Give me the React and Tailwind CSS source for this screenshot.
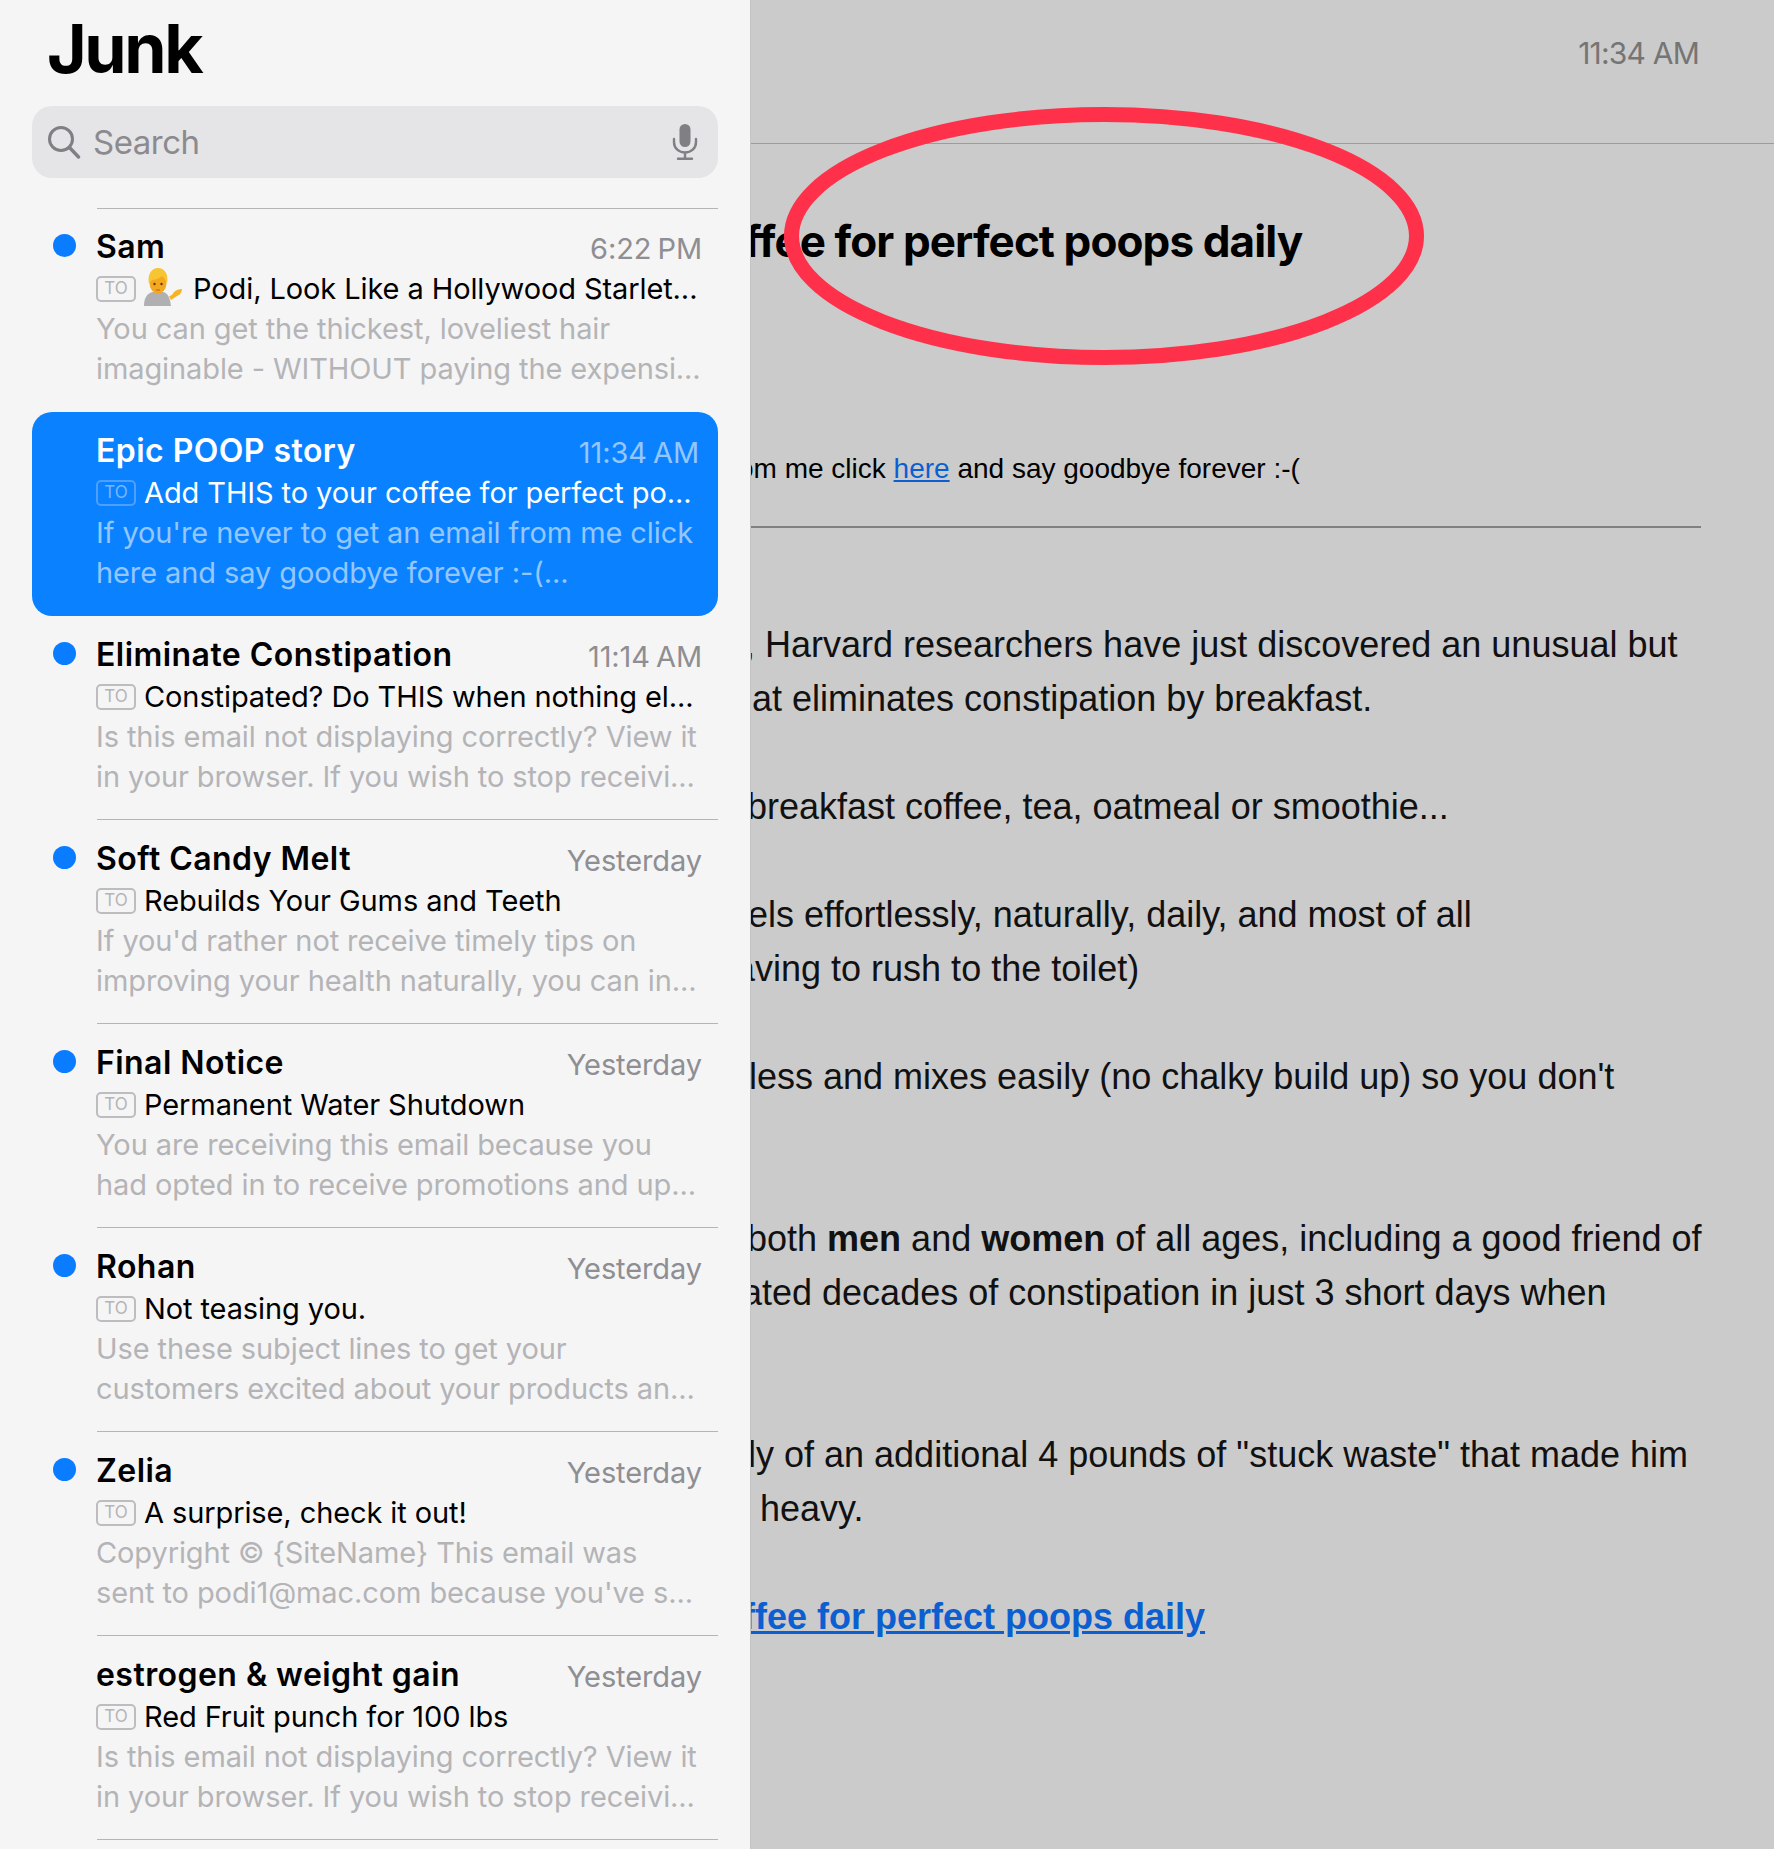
const rows = [
  { from: "Sam", time: "6:22 PM", subject: "Podi, Look Like a Hollywood Starlet...", emoji: true, l1: "You can get the thickest, loveliest hair", l2: "imaginable - WITHOUT paying the expensi...", unread: true },
  { from: "Epic POOP story", time: "11:34 AM", subject: "Add THIS to your coffee for perfect po...", l1: "If you're never to get an email from me click", l2: "here and say goodbye forever :-(...", selected: true },
  { from: "Eliminate Constipation", time: "11:14 AM", subject: "Constipated? Do THIS when nothing el...", l1: "Is this email not displaying correctly? View it", l2: "in your browser. If you wish to stop receivi...", unread: true },
  { from: "Soft Candy Melt", time: "Yesterday", subject: "Rebuilds Your Gums and Teeth", l1: "If you'd rather not receive timely tips on", l2: "improving your health naturally, you can in...", unread: true },
  { from: "Final Notice", time: "Yesterday", subject: "Permanent Water Shutdown", l1: "You are receiving this email because you", l2: "had opted in to receive promotions and up...", unread: true },
  { from: "Rohan", time: "Yesterday", subject: "Not teasing you.", l1: "Use these subject lines to get your", l2: "customers excited about your products an...", unread: true },
  { from: "Zelia", time: "Yesterday", subject: "A surprise, check it out!", l1: "Copyright © {SiteName} This email was", l2: "sent to podi1@mac.com because you've s...", unread: true },
  { from: "estrogen & weight gain", time: "Yesterday", subject: "Red Fruit punch for 100 lbs", l1: "Is this email not displaying correctly? View it", l2: "in your browser. If you wish to stop receivi..." },
];

function ToBadge({ selected }) {
  return (
    <span className={`flex h-[26px] w-[40px] shrink-0 items-center justify-center rounded-[5px] border-2 text-[17px] leading-none ${selected ? "border-[#4f9fff] text-[#7ab6ff]" : "border-[#bdbdbf] text-[#b4b4b6]"}`}>
      TO
    </span>
  );
}

// person tipping hand, drawn since the emoji font isn't installed
function PersonTipping() {
  return (
    <svg width="38" height="38" viewBox="0 0 38 38" className="mr-[3px] -mt-[3px] shrink-0">
      <path d="M0 38c0-8 3-13 9-14h10c5 1 7 6 8 14z" fill="#b0b0b2" />
      <path d="M25 28c2 0 3-1 5-4 2-2 5-3 8-3 0 3-2 6-5 7-2 1-4 3-6 4z" fill="#f5b325" />
      <ellipse cx="14" cy="15" rx="8.500" ry="10.500" fill="#f5a81f" />
      <path d="M5 16C3 6 8 0 14 0s11 5 9 16c-1-4-3-6-5-8-3 3-8 4-10 4-1 1-2 3-3 4z" fill="#f7c531" />
      <circle cx="10.500" cy="16" r="1.200" fill="#5a3a10" />
      <circle cx="17.500" cy="16" r="1.200" fill="#5a3a10" />
      <path d="M12 22h4" stroke="#b5651d" strokeWidth="1" />
    </svg>
  );
}

function MailRow({ row }) {
  const { selected, emoji } = row;
  const preview = `text-[29px] leading-[40px] tracking-[-0.1px] whitespace-nowrap ${selected ? "text-[#94c6ff]" : "text-[#b4b4b6]"}`;
  return (
    <div className={`relative pl-[64px] ${emoji ? "pt-[18px]" : "pt-[19px]"} ${selected ? "h-[204px] rounded-[20px] bg-[#0a82ff] pr-[19px]" : "h-[203px] pr-[16px]"}`}>
      {row.unread && <span className={`absolute left-[21px] h-[23px] w-[23px] rounded-full bg-[#0a7cff] ${emoji ? "top-[25px]" : "top-[26px]"}`} />}
      <div className="flex h-[40px] items-center justify-between">
        <span className={`text-[32px] font-semibold tracking-[0.45px] ${selected ? "text-white" : "text-black"}`}>{row.from}</span>
        <span className={`mt-[3px] text-[29px] tracking-[-0.1px] [word-spacing:-2px] ${selected ? "text-[#94c6ff]" : "text-[#8e8e93]"}`}>{row.time}</span>
      </div>
      <div className={`mt-[1px] flex h-[41px] items-center gap-[8px] text-[29px] tracking-[-0.1px] whitespace-nowrap ${selected ? "text-white" : "text-black"}`}>
        <ToBadge selected={selected} />
        {emoji && <PersonTipping />}
        <span>{row.subject}</span>
      </div>
      <p className={preview}>{row.l1}</p>
      <p className={preview}>{row.l2}</p>
    </div>
  );
}

function Sidebar() {
  return (
    <aside className="relative z-10 flex h-full w-[750px] shrink-0 flex-col overflow-hidden bg-[#f5f5f6] shadow-[1px_0_0_#c4c4c4]">
      <h1 className="pl-[47px] pt-[12px] text-[68px] leading-[72px] font-bold tracking-[-2.4px] text-black">Junk</h1>
      <div className="mx-[32px] mt-[22px] flex h-[72px] items-center rounded-[20px] bg-[#e5e5e7] pl-[15px] pr-[20px]">
        <svg width="34" height="34" viewBox="0 0 34 34" fill="none" stroke="#7f7f84" strokeWidth="3" strokeLinecap="round" className="shrink-0">
          <circle cx="14" cy="14" r="11.500" />
          <path d="M22.500 22.500 31.500 32" strokeWidth="3.400" />
        </svg>
        <span className="mt-[2px] ml-[12px] flex-1 text-[33px] tracking-[-0.5px] text-[#8b8b8f]">Search</span>
        <svg width="26" height="36" viewBox="0 0 26 36" fill="none" stroke="#7f7f84" strokeWidth="2.400" strokeLinecap="round" className="shrink-0">
          <rect x="7.500" y="0" width="11" height="23" rx="5.500" fill="#7f7f84" stroke="none" />
          <path d="M2 15v3c0 6.500 5 10.500 11 10.500S24 24.500 24 18v-3M13 28.500V34M6 34.800h14" />
        </svg>
      </div>
      <div className="mx-[32px] mt-[30px] flex flex-col">
        {rows.map((row, i) => (
          <div key={row.from}>
            {i !== 1 && i !== 2 && <div className="ml-[65px] h-px bg-[#b5b5b7]" />}
            <MailRow row={row} />
          </div>
        ))}
        <div className="ml-[65px] h-px bg-[#b5b5b7]" />
      </div>
    </aside>
  );
}

function Reader() {
  return (
    <main className="relative min-w-0 flex-1 overflow-hidden bg-[#cbcbcb] text-black">
      <div className="flex h-[144px] justify-end border-b border-[#9c9c9c] pr-[75px] pt-[33px] text-[30px] leading-[40px] tracking-[-0.8px] text-[#757575]">11:34 AM</div>
      <h2 className="mt-[69px] -ml-[6px] text-[44px] leading-[56px] font-bold tracking-[-0.9px] whitespace-nowrap">ffee for perfect poops daily</h2>
      <p className="mt-[182px] -ml-[12px] font-['Liberation_Sans'] text-[28px] leading-[36px] whitespace-nowrap">om me click <a className="text-[#0c5fd0] underline">here</a> and say goodbye forever :-(</p>
      <div className="mt-[39px] mr-[73px] h-[2px] bg-[#808080]" />
      <div className="mt-[90px] font-['Liberation_Sans'] text-[36px] leading-[54px] text-[#111] whitespace-nowrap">
        <p className="-ml-[5px]">, Harvard researchers have just discovered an unusual but</p>
        <p className="ml-[2px]">at eliminates constipation by breakfast.</p>
        <p className="mt-[54px] -ml-[3px]">breakfast coffee, tea, oatmeal or smoothie...</p>
        <p className="mt-[54px] -ml-[2px]">els effortlessly, naturally, daily, and most of all</p>
        <p className="-ml-[15px]">aving to rush to the toilet)</p>
        <p className="mt-[54px] -ml-[1px]">less and mixes easily (no chalky build up) so you don't</p>
        <p className="mt-[108px] -ml-[3px]">both <b>men</b> and <b>women</b> of all ages, including a good friend of</p>
        <p className="-ml-[8px]">ated decades of constipation in just 3 short days when</p>
        <p className="mt-[108px] -ml-[2px]">ly of an additional 4 pounds of "stuck waste" that made him</p>
        <p className="ml-[10px]">heavy.</p>
        <p className="mt-[54px] -ml-[7px] font-bold text-[#0c5fd0] underline">ffee for perfect poops daily</p>
      </div>
      <svg width="660" height="270" viewBox="0 0 660 270" fill="none" className="pointer-events-none absolute left-[25px] top-[102px]">
        <ellipse cx="329" cy="134" rx="312.500" ry="121.500" stroke="#ff304a" strokeWidth="15" />
      </svg>
    </main>
  );
}

export default function App() {
  return (
    <div className="flex h-[1849px] w-[1774px] overflow-hidden font-['Inter',sans-serif]">
      <Sidebar />
      <Reader />
    </div>
  );
}
